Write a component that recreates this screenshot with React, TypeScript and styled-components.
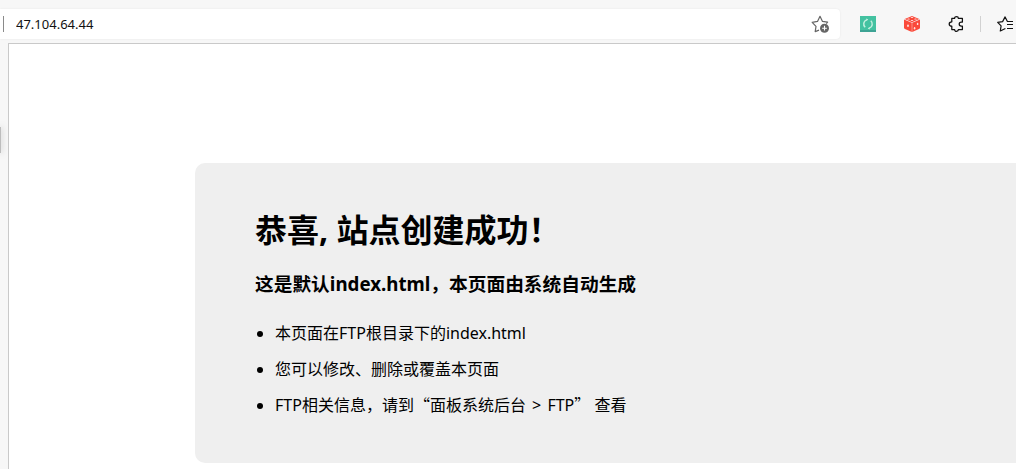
import React from "react";
import styled, { createGlobalStyle } from "styled-components";

const GlobalStyle = createGlobalStyle`
  * { box-sizing: border-box; }
  body {
    margin: 0;
    background: #f7f7f7;
    color: #000;
    font-family: "Noto Sans", "Noto Sans CJK SC", sans-serif;
    font-size: 16px;
  }
`;

const Window = styled.div`
  display: flex;
  flex-direction: column;
  min-height: 100vh;
  overflow: hidden;
`;

const Toolbar = styled.header`
  display: flex;
  align-items: center;
  padding: 9px 3px 4px 0;
`;

const AddressBar = styled.div`
  display: flex;
  flex: 1;
  align-items: center;
  height: 30px;
  padding: 0 11px 0 3px;
  border-radius: 0 4px 4px 0;
  background: #fff;
  box-shadow: 0 0 2px rgba(0, 0, 0, 0.08);
`;

const Divider = styled.span<{ $color: string }>`
  width: 1px;
  height: 16px;
  background: ${(p) => p.$color};
`;

const AddressInput = styled.input`
  flex: 1;
  min-width: 0;
  height: 24px;
  padding: 0 12px;
  border: 0;
  outline: 0;
  background: transparent;
  color: #111;
  font: inherit;
  font-size: 13px;
`;

const IconButton = styled.button<{ $size?: number }>`
  display: block;
  width: ${(p) => p.$size ?? 16}px;
  height: ${(p) => p.$size ?? 16}px;
  padding: 0;
  border: 0;
  background: none;

  svg {
    display: block;
    width: 100%;
    height: 100%;
  }
`;

const Extensions = styled.div`
  display: flex;
  gap: 28px;
  padding: 0 16px 0 20px;
`;

const Favorites = styled.div`
  padding-left: 16px;
`;

const Body = styled.div`
  display: flex;
  flex: 1;
`;

const Gutter = styled.div`
  width: 8px;
  padding-top: 84px;
  overflow: hidden;
`;

const GutterHandle = styled.div`
  width: 1px;
  height: 26px;
  background: #bdbdbd;
  box-shadow: 0 0 6px rgba(0, 0, 0, 0.5);
`;

const Page = styled.main`
  flex: 1;
  min-width: 0;
  padding: 119px 0 6px 186px;
  border: solid #c9c9c9;
  border-width: 1px 0 0 1px;
  background: #fff;
`;

const Card = styled.section`
  padding: 39px 0 40px 60px;
  border-radius: 10px 0 0 10px;
  background: #efefef;
`;

const Title = styled.h1`
  margin: 0 0 12px;
  font-size: 32px;
  line-height: 56px;
`;

const Subtitle = styled.h3`
  margin: 0 0 17px;
  line-height: 28px;
`;

const Notes = styled.ul`
  margin: 0;
  padding-left: 20px;
  line-height: 36px;
`;

const WideQuote = styled.span`
  font-family: "Noto Sans CJK SC", sans-serif;
  line-height: 1;
`;

const PathArrow = styled.span`
  margin: 0 2px;
`;

const AddFavoriteIcon = () => (
  <svg viewBox="0 0 18 18" fill="none" aria-hidden="true">
    <path
      d="M8 15.1 L4.2 16.6 L5 11.3 L1.2 7.3 L6.5 6.4 L9 1.3 L11.5 6.4 L16.6 7.2 L15.3 8.7"
      stroke="#666"
      strokeWidth="1.2"
      strokeLinejoin="round"
    />
    <circle cx="13.5" cy="13.2" r="4.5" fill="#666" />
    <path d="M13.5 10.8v4.8M11.1 13.2h4.8" stroke="#fff" strokeWidth="1.1" />
  </svg>
);

const SyncIcon = () => (
  <svg viewBox="0 0 16 16" fill="none" aria-hidden="true">
    <path d="M0 0h16v16H0z" fill="#44c2a1" />
    <path d="M0 14h16v2H0z" fill="#3da394" />
    <path
      d="M6.6 3.9A4.3 4.3 0 0 0 5.2 11.2M9.4 12.1A4.3 4.3 0 0 0 10.8 4.8"
      stroke="#c5f0df"
      strokeWidth="1.5"
    />
    <path d="M6.2 2.5 8.2 3.6 6.5 5zM9.8 13.5 7.8 12.4 9.5 11z" fill="#d5f5e9" />
  </svg>
);

const DiceIcon = () => (
  <svg viewBox="0 0 16 16" aria-hidden="true">
    <path d="M8 0 L15.3 3 L8 6.3 L.7 3Z" fill="#f9493a" />
    <path d="M0 3.5 L7.8 6.8 V16 L1 13 Q0 12.5 0 11.5Z" fill="#fb4a3a" />
    <path d="M16 3.5 L8.2 6.8 V16 L15 13 Q16 12.5 16 11.5Z" fill="#fb4a3a" />
    <g fill="#ffe3df">
      <ellipse cx="8" cy="1.5" rx="1.3" ry=".6" />
      <ellipse cx="4.5" cy="3" rx="1.3" ry=".6" />
      <ellipse cx="11.5" cy="3" rx="1.3" ry=".6" />
      <ellipse cx="8" cy="4.5" rx="1.3" ry=".6" />
      <ellipse cx="4" cy="9.8" rx=".9" ry="1.2" />
      <ellipse cx="13.6" cy="7.9" rx=".8" ry="1.2" />
      <ellipse cx="10.6" cy="12.3" rx=".8" ry="1.2" />
    </g>
  </svg>
);

const PuzzleIcon = () => (
  <svg viewBox="0 0 16 16" fill="none" aria-hidden="true">
    <path
      d="M3.8 2.4H6.6C6.6 1.2 7.5 .7 8.5 .7S10.4 1.2 10.4 2.4H14.4V6H13.3C12 6 11.2 6.9 11.2 8S12 10 13.3 10H14.4V13.6H10.4C10.4 14.8 9.5 15.3 8.5 15.3S6.6 14.8 6.6 13.6H3.8V10.2C2.4 10.2 1.2 9.3 1.2 8S2.4 5.8 3.8 5.8Z"
      stroke="#111"
      strokeWidth="1.25"
      strokeLinejoin="round"
    />
  </svg>
);

const FavoritesIcon = () => (
  <svg viewBox="0 0 16 16" fill="none" aria-hidden="true">
    <path
      d="M10.4 5.5 8.1 .9 5.6 5.6.7 6.4 4.1 9.8 3.3 15 8.4 12.5"
      stroke="#111"
      strokeWidth="1.2"
      strokeLinejoin="round"
    />
    <path d="M10 5.5h6M10 8.5h6M10 12.5h6" stroke="#111" strokeWidth="1.1" />
  </svg>
);

export default function App() {
  return (
    <Window>
      <GlobalStyle />
      <Toolbar>
        <AddressBar>
          <Divider $color="#8a8a8a" />
          <AddressInput aria-label="地址" type="text" defaultValue="47.104.64.44" />
          <IconButton $size={18} type="button" aria-label="添加到收藏夹">
            <AddFavoriteIcon />
          </IconButton>
        </AddressBar>
        <Extensions>
          <IconButton type="button" aria-label="同步">
            <SyncIcon />
          </IconButton>
          <IconButton type="button" aria-label="骰子">
            <DiceIcon />
          </IconButton>
          <IconButton type="button" aria-label="扩展">
            <PuzzleIcon />
          </IconButton>
        </Extensions>
        <Divider $color="#d2d2d2" />
        <Favorites>
          <IconButton type="button" aria-label="收藏夹">
            <FavoritesIcon />
          </IconButton>
        </Favorites>
      </Toolbar>
      <Body>
        <Gutter>
          <GutterHandle />
        </Gutter>
        <Page>
          <Card>
            <Title>恭喜, 站点创建成功！</Title>
            <Subtitle>这是默认index.html，本页面由系统自动生成</Subtitle>
            <Notes>
              <li>本页面在FTP根目录下的index.html</li>
              <li>您可以修改、删除或覆盖本页面</li>
              <li>
                FTP相关信息，请到<WideQuote>“</WideQuote>面板系统后台{" "}
                <PathArrow>&gt;</PathArrow> FTP<WideQuote>”</WideQuote> 查看
              </li>
            </Notes>
          </Card>
        </Page>
      </Body>
    </Window>
  );
}
